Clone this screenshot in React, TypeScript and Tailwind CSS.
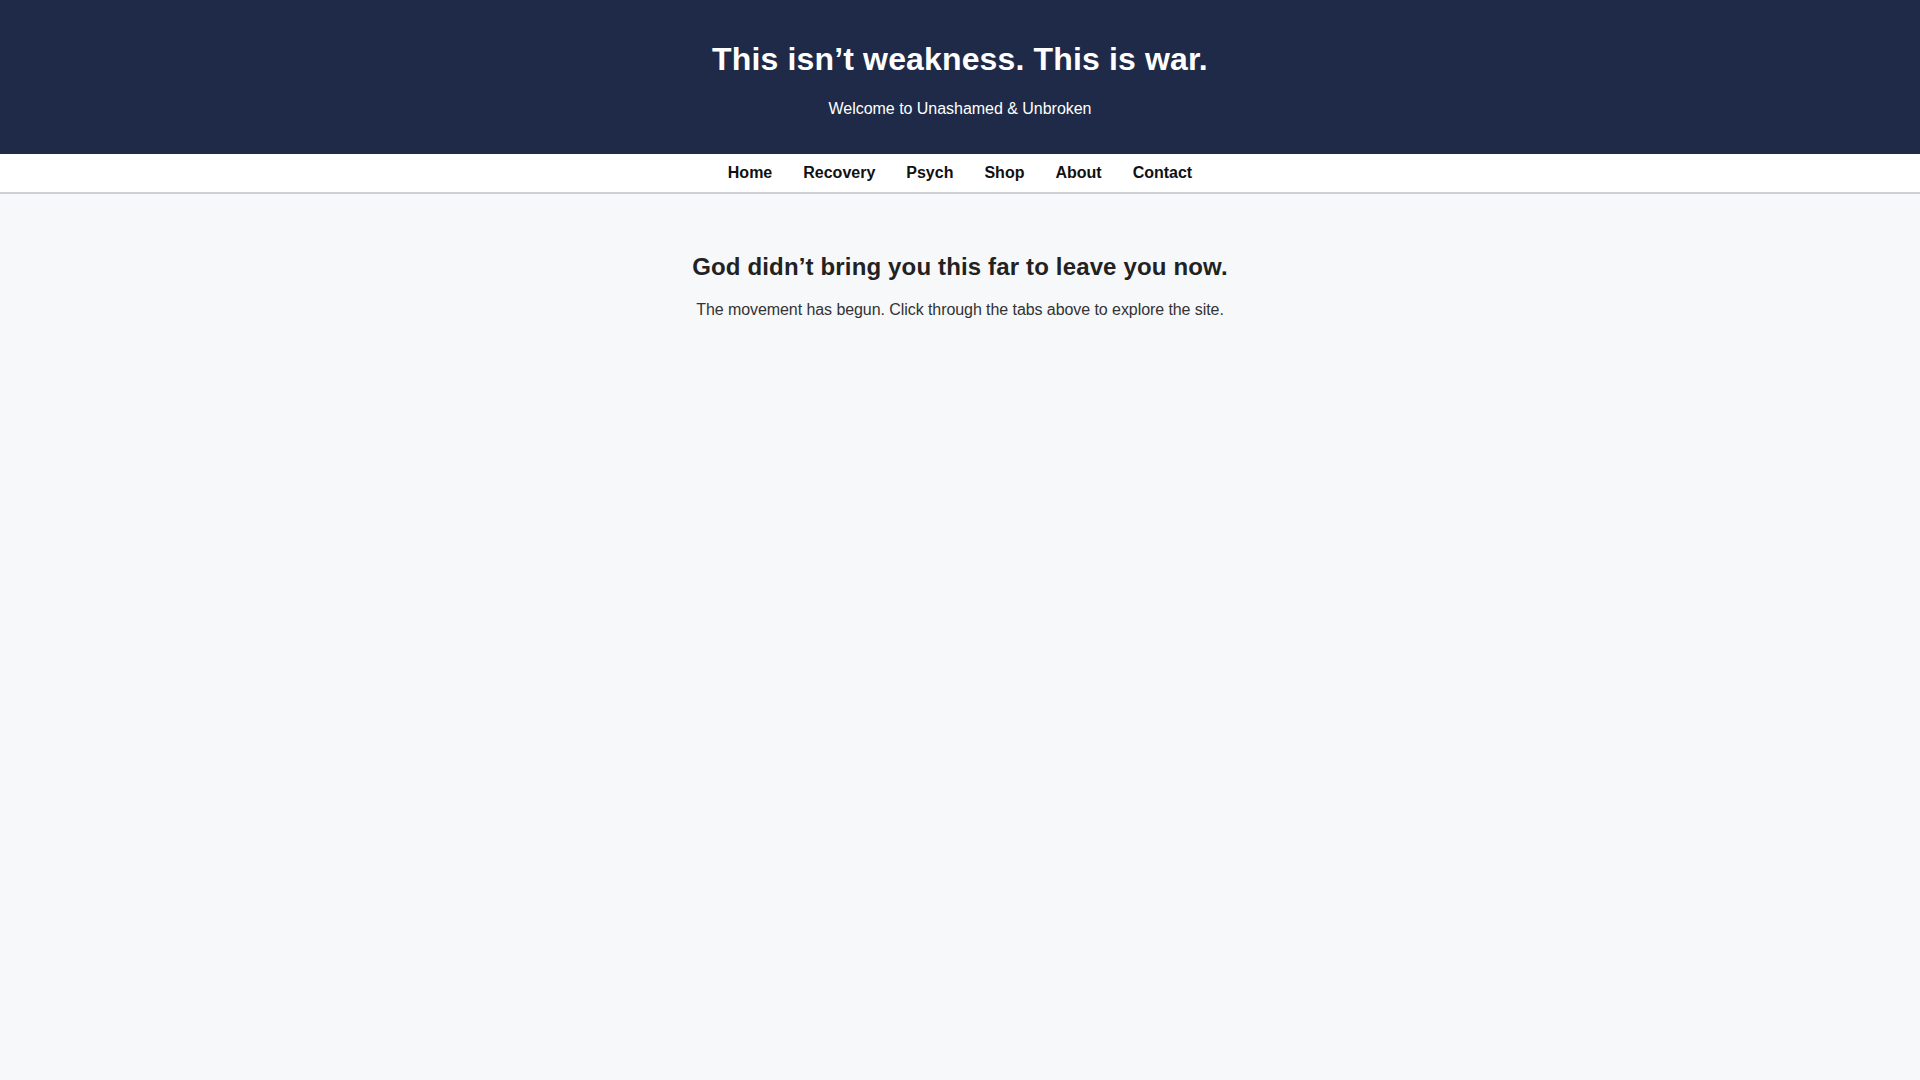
export default function App() {
  const links = ["Home", "Recovery", "Psych", "Shop", "About", "Contact"];
  return (
    <div className="min-h-screen bg-[#f7f8fa] font-['Liberation_Sans',Arial,sans-serif]">
      <header className="bg-[#1e2a48] pt-[41px] pb-[36px] text-center text-white">
        <h1 className="text-[32px] leading-[37px] font-bold tracking-[0.15px]">This isn’t weakness. This is war.</h1>
        <p className="mt-[22px] text-[16px] leading-[18px] tracking-[-0.03px]">Welcome to Unashamed &amp; Unbroken</p>
      </header>
      <nav className="bg-white border-b-2 border-[#cfd0d3] pt-[10px] pb-[10px] flex justify-center gap-[31px]">
        {links.map((l) => (
          <a key={l} href="#" className="text-[16px] leading-[18px] font-bold text-[#111]">
            {l}
          </a>
        ))}
      </nav>
      <main className="pt-[39px] text-center">
        <h2 className="mt-[20px] text-[24px] leading-[28px] font-bold text-[#222] tracking-[0.15px]">
          God didn’t bring you this far to leave you now.
        </h2>
        <p className="mt-[20px] text-[16px] leading-[18px] text-[#333] tracking-[-0.07px]">
          The movement has begun. Click through the tabs above to explore the site.
        </p>
      </main>
    </div>
  );
}
